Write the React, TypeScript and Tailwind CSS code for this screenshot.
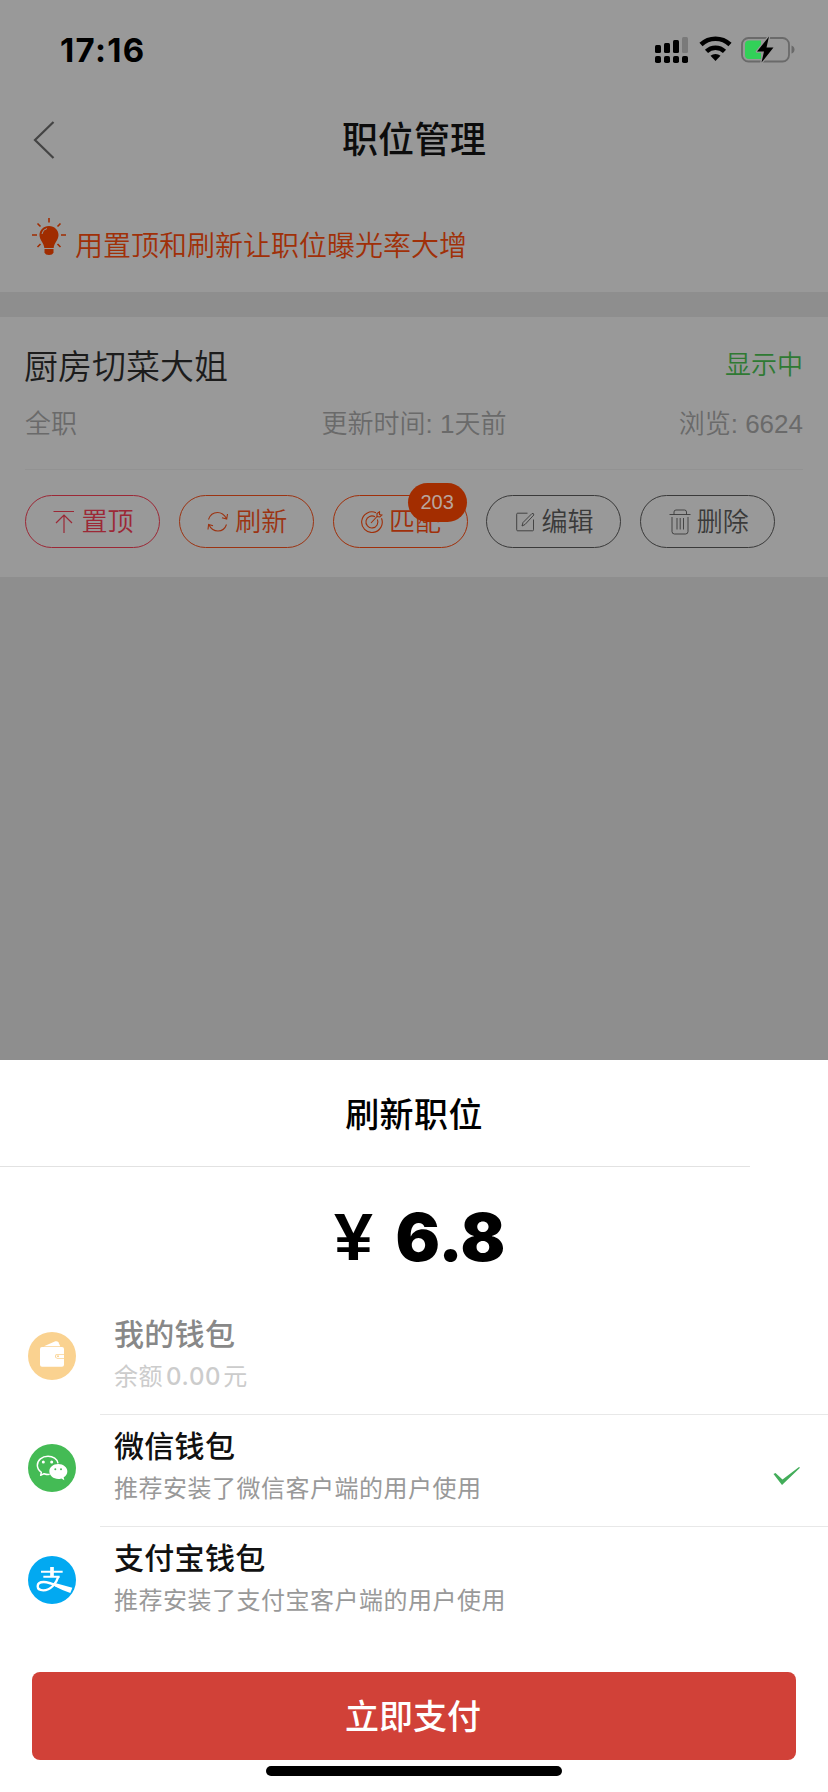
import React from "react";

const cjk = "font-['Liberation_Sans','Noto_Sans_CJK_SC',sans-serif]";

// Row actions under each job
const actions = [
  { id: "top", label: "置顶", color: "text-[#9c2836]", badge: null, icon: <TopIcon /> },
  { id: "refresh", label: "刷新", color: "text-[#9c3412]", badge: null, icon: <RefreshIcon /> },
  { id: "match", label: "匹配", color: "text-[#a0300a]", badge: "203", icon: <MatchIcon /> },
  { id: "edit", label: "编辑", color: "text-[#3a3a3a]", badge: null, icon: <EditIcon /> },
  { id: "delete", label: "删除", color: "text-[#3a3a3a]", badge: null, icon: <TrashIcon /> },
];

function TopIcon() {
  return (
    <svg width="22" height="24" viewBox="0 0 22 24" fill="none" stroke="currentColor" strokeWidth="1.2">
      <path d="M0.5 1.5H21M11 23V5M3 13L11 5L19 13" />
    </svg>
  );
}

function RefreshIcon() {
  return (
    <svg width="22" height="22" viewBox="0 0 22 22" fill="none" stroke="currentColor" strokeWidth="1.1">
      <path d="M1.5 8.5C3 4 6.5 1.5 10.5 1.5C14.5 1.5 17.5 4 19.5 7.5M20.5 3L19.7 8L15 6.8" />
      <path d="M19.5 13.5C18 18 15 20 11 20C7 20 4 18 2 14M1 18.5L1.6 13.5L6 14.8" />
    </svg>
  );
}

function MatchIcon() {
  return (
    <svg width="22" height="22" viewBox="0 0 22 22" fill="none" stroke="currentColor" strokeWidth="1.1">
      <path d="M15 1.7A10.3 10.3 0 1 0 20.5 7.3" />
      <path d="M14 5.8A6 6 0 1 0 16.4 8.5" />
      <path d="M10 12L16 5.5M16 5.5V2.5L18.5 0.8V3.5L21 4L18.8 6L16 5.5" />
    </svg>
  );
}

function EditIcon() {
  return (
    <svg width="19" height="20" viewBox="0 0 19 20" fill="none" stroke="currentColor" strokeWidth="0.9">
      <path d="M11.5 1.2H1.7Q0.7 1.2 0.7 2.2V17.8Q0.7 18.8 1.7 18.8H16.5Q17.5 18.8 17.5 17.8V7.5" />
      <path d="M6 14L7 10.5L16 1.5Q18 1 17.8 3L9 12.5L6 14Z" />
    </svg>
  );
}

function TrashIcon() {
  return (
    <svg width="22" height="26" viewBox="0 0 22 26" fill="none" stroke="currentColor" strokeWidth="0.9">
      <path d="M0.5 5.5H21.5M5 5.5V3Q5 1 7 1H15.5Q17.5 1 17.5 3V5.5" />
      <path d="M3 8V22.5Q3 25 5.5 25H16.5Q19 25 19 22.5V8M8 9V20.5M11.2 9V20.5M14.5 9V20.5" />
    </svg>
  );
}

function BulbIcon() {
  return (
    <svg width="34" height="38" viewBox="0 0 34 38" className="text-[#a02c00]">
      <path
        fill="currentColor"
        d="M17 8C11.5 8 7.5 12 7.5 17C7.5 22 12 25 12.3 30H21.7C22 25 26.5 22 26.5 17C26.5 12 22.5 8 17 8Z"
      />
      <path fill="currentColor" d="M12.5 31H21.5V34.5Q20.5 37 17 37Q13.5 37 12.5 34.5Z" />
      <path
        fill="none"
        stroke="currentColor"
        strokeWidth="1.6"
        d="M17 0V4.5M5.5 5.5L8.5 8.5M28.5 5.5L25.5 8.5M0 17H5M29 17H34M5.5 29L8.5 26M28.5 29L25.5 26"
      />
      <path fill="none" stroke="#999" strokeWidth="1" d="M10 16Q10.5 11.5 15 10.5" />
    </svg>
  );
}

function StatusIcons() {
  return (
    <svg width="140" height="28" viewBox="0 0 140 28">
      {/* Dual SIM signal */}
      <g fill="#000">
        <rect x="0" y="9" width="6" height="8" rx="1.5" />
        <rect x="9" y="7" width="6" height="10" rx="1.5" />
        <rect x="18" y="4" width="6" height="13" rx="1.5" />
        <rect x="27" y="1" width="6" height="16" rx="1.5" fill="#7a7a7a" />
        <rect x="0" y="20" width="6" height="7" rx="1.8" />
        <rect x="9" y="20" width="6" height="7" rx="1.8" />
        <rect x="18" y="20" width="6" height="7" rx="1.8" />
        <rect x="27" y="20" width="6" height="7" rx="1.8" />
      </g>
      {/* Wifi */}
      <g fill="none" stroke="#000" strokeWidth="4.5">
        <path d="M46 8.5A21 21 0 0 1 75 8.5" />
        <path d="M51.5 15.3A13 13 0 0 1 69.5 15.3" />
      </g>
      <path fill="#000" d="M55.5 19.8A7.5 7.5 0 0 1 65.5 19.8L60.5 25Z" />
      {/* Battery */}
      <rect x="87" y="2" width="47" height="23.5" rx="6.5" fill="none" stroke="#6a6a6a" strokeWidth="1.8" />
      <path fill="#6a6a6a" d="M136.5 9.5Q139.5 10.5 139.5 13.5Q139.5 16.5 136.5 17.5Z" />
      <path fill="#32d158" d="M94 4.5H106V23H94Q90 23 90 19V8.5Q90 4.5 94 4.5Z" />
      <path
        d="M114 0.5L102 15.5H109L106.5 26.5L118.5 11.5H111.5Z"
        fill="#000"
        stroke="#999"
        strokeWidth="2.5"
        strokeLinejoin="round"
        paintOrder="stroke"
      />
    </svg>
  );
}

function WalletLogo() {
  return (
    <svg width="48" height="48" viewBox="0 0 144 144">
      <circle cx="72" cy="72" r="72" fill="#fad290" />
      <path fill="#fff" d="M48 43L82 28Q88 26 91 31L97 43Z" />
      <path
        fill="#fff"
        d="M42 45H102Q108 45 108 51V66H88Q81 66 81 73Q81 80 88 80H108V98Q108 104 102 104H42Q36 104 36 98V51Q36 45 42 45Z"
      />
      <path fill="#fff" d="M88 68H108V78H88Q84 78 84 73Q84 68 88 68Z" />
      <circle cx="90" cy="73" r="3" fill="#fad290" />
    </svg>
  );
}

function WechatLogo() {
  return (
    <svg width="48" height="48" viewBox="0 0 144 144">
      <circle cx="72" cy="72" r="72" fill="#44bb55" />
      <path
        d="M90 58C88 45 75 37 60 37C42 37 28 48 28 64C28 73 33 80 40 85L38 94L48 89C54 91 60 92 65 91"
        fill="none"
        stroke="#fff"
        strokeWidth="4.5"
        strokeLinejoin="round"
      />
      <circle cx="46" cy="54" r="4.5" fill="#fff" />
      <circle cx="71" cy="54" r="4.5" fill="#fff" />
      <path
        fill="#fff"
        d="M91 60C75 60 64 70 64 82C64 95 76 105 91 105Q96 105 100 103.5L109 109L107 100C114 96 118 90 118 82C118 70 106 60 91 60Z"
      />
      <circle cx="82" cy="76" r="3" fill="#44bb55" />
      <circle cx="99" cy="76" r="3" fill="#44bb55" />
    </svg>
  );
}

function AlipayLogo() {
  return (
    <svg width="48" height="48" viewBox="0 0 144 144">
      <circle cx="72" cy="72" r="72" fill="#02a9f1" />
      <path fill="none" stroke="#fff" strokeWidth="6" d="M39 47H104M46 62H95" />
      <path fill="none" stroke="#fff" strokeWidth="11" d="M72 33V62" />
      <path
        fill="none"
        stroke="#fff"
        strokeWidth="7"
        d="M91 62C85 82 68 103 46 103C34 103 29 97 29 91C29 83 36 78 47 78C65 78 84 88 126 104"
      />
      <path fill="#fff" d="M84 82L133 95L127 111Q104 104 80 91Z" />
    </svg>
  );
}

// Payment channels
const channels = [
  { id: "wallet", name: "我的钱包", nameColor: "text-[#888]", noteColor: "text-[#ccc]", logo: <WalletLogo />, selected: false,
    note: <>余额<span className="mr-[2px] ml-[3px] font-['Inter'] font-medium tracking-[0.7px]">0.00</span>元</> },
  { id: "wechat", name: "微信钱包", nameColor: "text-[#111]", noteColor: "text-[#999]", logo: <WechatLogo />, selected: true,
    note: "推荐安装了微信客户端的用户使用" },
  { id: "alipay", name: "支付宝钱包", nameColor: "text-[#111]", noteColor: "text-[#999]", logo: <AlipayLogo />, selected: false,
    note: "推荐安装了支付宝客户端的用户使用" },
];

export default function App() {
  return (
    <div className={`flex h-[1792px] w-[828px] flex-col overflow-hidden bg-[#8e8e8e] ${cjk}`}>
      {/* Status bar */}
      <div className="flex h-[88px] items-start justify-between bg-[#999] pt-[36px] pr-[33px] pl-[60px]">
        <span className="font-['Inter'] text-[33px] leading-[28px] font-bold tracking-[1.3px] text-black">17:16</span>
        <StatusIcons />
      </div>

      {/* Nav bar */}
      <div className="grid h-[104px] grid-cols-[1fr_auto_1fr] items-center bg-[#999] px-[33px]">
        <svg width="22" height="38" viewBox="0 0 22 38" fill="none" stroke="#444" strokeWidth="2.2">
          <path d="M20.5 1L2 19L20.5 37" />
        </svg>
        <h1 className="pt-[2px] text-[36px] leading-[40px] font-medium text-[#0c0c0c]">职位管理</h1>
      </div>

      {/* Tip */}
      <div className="flex h-[100px] items-start gap-[9px] bg-[#999] pt-[26px] pl-[32px]">
        <BulbIcon />
        <p className="mt-[9px] text-[28px] leading-[40px] font-[350] text-[#a03008]">用置顶和刷新让职位曝光率大增</p>
      </div>

      {/* Job card */}
      <div className="mt-[25px] h-[260px] bg-[#999] px-[25px]">
        <div className="flex items-start justify-between pt-[28px]">
          <h2 className="-ml-px text-[34px] leading-[44px] font-[350] text-[#1c1c1c]">厨房切菜大姐</h2>
          <span className="text-[26px] leading-[40px] font-[350] text-[#2f7a33]">显示中</span>
        </div>
        <div className="mt-[15px] grid grid-cols-[1fr_auto_1fr] text-[26px] leading-[40px] font-[350] text-[#6a6a6a]">
          <span>全职</span>
          <span>更新时间: 1天前</span>
          <span className="text-right">浏览: 6624</span>
        </div>
        <div className="mt-[25px] h-px bg-[#929292]" />
        <div className="mt-[25px] flex gap-[18.8px]">
          {actions.map((a) => (
            <button
              key={a.id}
              className={`relative flex h-[53px] w-[135px] shrink-0 items-center justify-center gap-[6px] rounded-full border border-current pl-[2px] text-[26px] leading-[36px] font-[350] ${a.color}`}
            >
              {a.icon}
              <span className="pt-px">{a.label}</span>
              {a.badge && (
                <span className="absolute -top-[13px] right-0 flex h-[39px] w-[59px] items-center justify-center rounded-full bg-[#a32d00] pb-px text-[20px] text-[#b9a59d]">
                  {a.badge}
                </span>
              )}
            </button>
          ))}
        </div>
      </div>

      {/* Payment sheet */}
      <div className="mt-auto flex h-[732px] flex-col bg-white">
        <h2 className="h-[106px] text-center text-[34px] leading-[110px] font-medium tracking-[0.4px] text-black">刷新职位</h2>
        <div className="h-px w-[750px] bg-[#e2e2e2]" />
        <div className="flex h-[136px] items-center justify-center gap-[24px] pt-[4px] pl-[12px] leading-[80px] text-black">
          <span className="scale-x-[1.06] text-[66px] font-bold">¥</span>
          <span className="font-['Inter'] text-[66px] font-black">6.8</span>
        </div>

        {channels.map((c, i) => (
          <div key={c.id} className="flex h-[112px] pl-[28px]">
            <div className="flex w-[72px] items-center pb-[6px]">{c.logo}</div>
            <div className={`flex flex-1 items-center justify-between pr-[28px] pb-[6px] pl-[14px] ${i < 2 ? "border-b border-[#e8e8e8]" : ""}`}>
              <div>
                <p className={`text-[30px] leading-[42px] font-medium tracking-[0.3px] ${c.nameColor}`}>{c.name}</p>
                <p className={`text-[24px] leading-[42px] tracking-[0.5px] ${c.noteColor}`}>{c.note}</p>
              </div>
              {c.selected && (
                <svg width="27" height="18" viewBox="0 0 27 18" className="mt-[16px]">
                  <path fill="#43ad5a" d="M0.5 7L2.5 6L9.5 12.5L26 0L27 0.8L9 18Z" />
                </svg>
              )}
            </div>
          </div>
        ))}

        <button className="mx-[32px] mt-[33px] h-[88px] rounded-[8px] bg-[#d14138] pr-[2px] text-[34px] leading-[90px] font-medium text-white">
          立即支付
        </button>
        <div className="mx-auto mt-[6px] h-[10px] w-[296px] rounded-full bg-black" />
      </div>
    </div>
  );
}
